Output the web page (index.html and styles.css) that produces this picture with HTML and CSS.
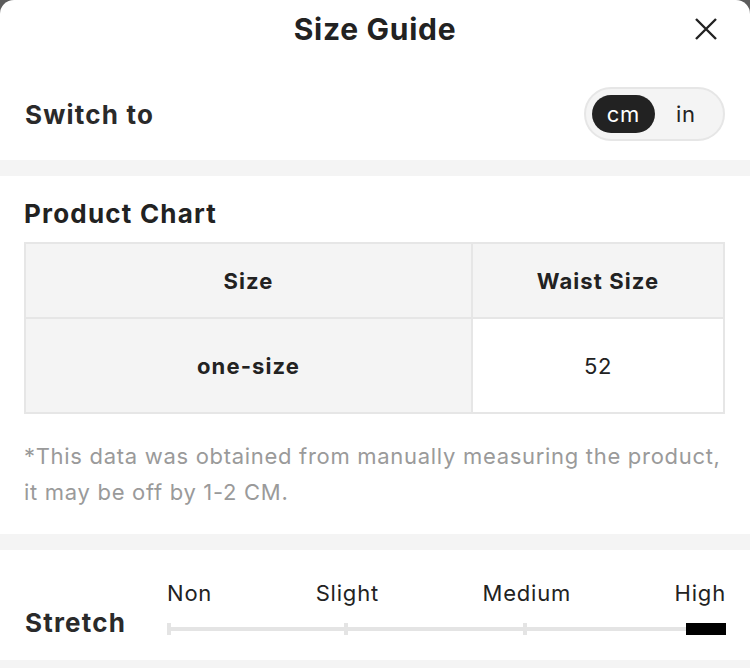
FILE: index.html
```html
<!DOCTYPE html>
<html>
<head>
<meta charset="utf-8">
<link rel="stylesheet" href="styles.css">
</head>
<body>
<div class="sheet">
  <header class="head">
    <h1 class="title">Size Guide</h1>
    <button class="close" aria-label="Close">
      <svg width="24" height="24" viewBox="0 0 24 24"><path d="M2 2 L22 22 M22 2 L2 22" stroke="#222" stroke-width="2.4" fill="none"/></svg>
    </button>
  </header>
  <section class="switch-row">
    <span class="label">Switch to</span>
    <div class="toggle">
      <span class="opt active">cm</span>
      <span class="opt">in</span>
    </div>
  </section>
  <div class="band"></div>
  <section class="chart">
    <h2 class="heading">Product Chart</h2>
    <table class="table">
      <tr class="hrow"><th>Size</th><th>Waist Size</th></tr>
      <tr class="brow"><td class="first">one-size</td><td>52</td></tr>
    </table>
    <p class="note">*This data was obtained from manually measuring the product, it may be off by 1-2 CM.</p>
  </section>
  <div class="band"></div>
  <section class="stretch">
    <span class="label">Stretch</span>
    <div class="scale">
      <div class="levels"><span>Non</span><span>Slight</span><span>Medium</span><span>High</span></div>
      <div class="track">
        <div class="seg s1"></div>
        <div class="seg s2"></div>
        <div class="seg s3"><div class="mark"></div></div>
      </div>
    </div>
  </section>
  <div class="band bottom"></div>
</div>
</body>
</html>
```
FILE: styles.css
```css
* { box-sizing: border-box; }
html, body { margin: 0; padding: 0; }
body {
  background: #5c5c5c;
  font-family: Inter, "Noto Sans", sans-serif;
  color: #222;
  width: 750px;
  height: 668px;
  overflow: hidden;
}
.sheet {
  background: #fff;
  border-radius: 14px 14px 0 0;
  height: 668px;
  display: flex;
  flex-direction: column;
}
.head {
  height: 58px;
  display: flex;
  align-items: center;
  justify-content: center;
  position: relative;
}
.title {
  margin: 0;
  font-size: 30px;
  font-weight: 700;
  letter-spacing: 0.7px;
}
.close {
  position: absolute;
  right: 32px;
  top: 17px;
  border: 0;
  background: none;
  padding: 0;
  width: 24px;
  height: 24px;
}
.close svg { display: block; }
.switch-row {
  height: 102px;
  display: flex;
  align-items: center;
  justify-content: space-between;
  padding: 10px 25px 0 25px;
}
.label {
  font-size: 26px;
  font-weight: 700;
  letter-spacing: 1.2px;
  color: #2a2a2a;
}
.toggle {
  width: 141px;
  height: 54px;
  border: 2px solid #e6e6e6;
  background: #f4f4f4;
  border-radius: 27px;
  display: flex;
  align-items: center;
  padding: 0 6px;
}
.opt {
  width: 65px;
  height: 38px;
  border-radius: 19px;
  display: flex;
  align-items: center;
  justify-content: center;
  font-size: 22px;
  letter-spacing: 0.6px;
  color: #222;
}
.opt.active { background: #222; color: #fff; }
.band { height: 16px; background: #f4f4f4; flex: none; }
.band.bottom { height: 8px; margin-top: auto; }
.chart { padding: 22px 25px 0 24px; }
.heading {
  margin: 0 0 12px;
  font-size: 26px;
  font-weight: 700;
  letter-spacing: 1.2px;
  line-height: 32px;
}
.table {
  width: 701px;
  border-collapse: collapse;
  border: 2px solid #e6e6e6;
  table-layout: fixed;
}
.table th, .table td {
  border: 2px solid #e6e6e6;
  text-align: center;
  font-size: 22px;
  letter-spacing: 0.6px;
  padding: 0;
}
.table th:first-child, .table td:first-child { width: 447px; }
.hrow { height: 75px; background: #f4f4f4; }
.hrow th, .brow td.first { font-weight: 700; letter-spacing: 1.1px; }
.brow { height: 95px; }
.brow td.first { background: #f4f4f4; }
.note {
  margin: 24px 0 24px;
  color: #9a9a9a;
  font-size: 22px;
  letter-spacing: 0.7px;
  line-height: 36px;
}
.stretch {
  height: 110px;
  display: flex;
  align-items: flex-end;
  padding: 0 24px 25px 25px;
}
.stretch .label { line-height: 30px; margin-bottom: -3px; }
.scale { margin-left: auto; width: 559px; }
.levels {
  display: flex;
  justify-content: space-between;
  font-size: 22px;
  letter-spacing: 0.8px;
  color: #222;
  line-height: 28px;
}
.track {
  display: flex;
  margin-top: 15px;
  height: 13px;
  align-items: center;
}
.seg {
  height: 4px;
  background: #e4e4e4;
  position: relative;
}
.seg::before {
  content: "";
  position: absolute;
  left: 0;
  top: -4px;
  width: 4px;
  height: 12px;
  background: #e4e4e4;
}
.s1 { width: 177px; }
.s2 { width: 179px; }
.s3 { flex: 1; display: flex; justify-content: flex-end; align-items: center; }
.mark { width: 40px; height: 12px; background: #000; position: relative; z-index: 1; }
```
